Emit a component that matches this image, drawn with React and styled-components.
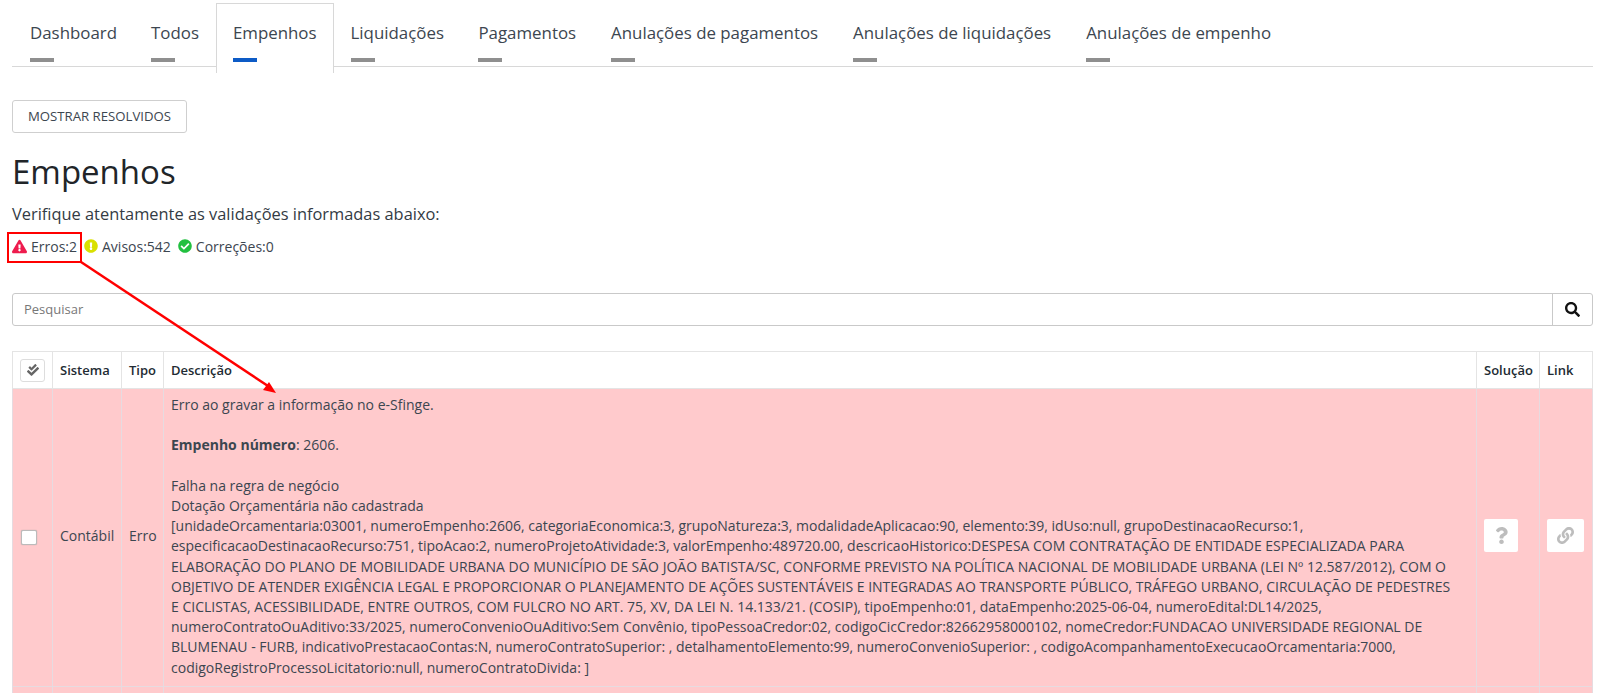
import React from "react";
import styled, { createGlobalStyle } from "styled-components";
import { FaExclamationTriangle, FaExclamationCircle, FaCheckCircle, FaSearch, FaQuestion, FaLink, FaCheckDouble } from "react-icons/fa";

const Global = createGlobalStyle`
  html, body { margin: 0; padding: 0; height: 693px; overflow: hidden; background: #fff; }
  body { font-family: "Open Sans", sans-serif; color: #212529; }
`;
const Page = styled.div`
  position: relative; width: 1600px; height: 693px; overflow: hidden; box-sizing: border-box;
  padding: 0 7px 0 12px;
`;
const Tabs = styled.nav`
  display: flex; height: 66px; border-bottom: 1px solid #d8d8d8; padding-left: 1px;
`;
const Tab = styled.div`
  box-sizing: border-box; height: ${p => (p.$active ? "70px" : "66px")}; margin-top: ${p => (p.$active ? "3px" : "0")};
  padding: ${p => (p.$active ? "17px 16px 0" : `21px ${p.$tight ? 17 : 17.5}px 0`)};
  border: ${p => (p.$active ? "1px solid #d8d8d8" : "0")}; border-bottom: 0;
  background: #fff; font-size: 16.88px; line-height: 24px; color: #3c4650; white-space: nowrap; position: relative;
  &::after {
    content: ""; display: block; width: 24px; height: 4px; margin-top: 13px;
    background: ${p => (p.$active ? "#0d5bc6" : "#8f8f8f")};
  }
`;
const ResolveButton = styled.button`
  display: block; box-sizing: border-box; margin: 33px 0 0; width: 175px; height: 33px;
  background: #fff; border: 1px solid #cfcfcf; border-radius: 3px;
  font: 13.2px/1 "Open Sans", sans-serif; color: #3c4650; padding: 0;
`;
const Title = styled.h1`
  margin: 17px 0 0; font-size: 33px; line-height: 44px; font-weight: 400; color: #212529;
`;
const Lead = styled.p`
  margin: 9px 0 0; font-size: 16.4px; line-height: 22px; color: #333b44;
`;
const Statuses = styled.div`
  display: flex; align-items: center; gap: 7px; margin-top: 10px; height: 22px; font-size: 14px; color: #3c4650;
`;
const Status = styled.span`
  display: inline-flex; align-items: center; gap: 4px;
  svg { color: ${p => p.$color}; font-size: ${p => p.$size || 14}px; }
`;
const Search = styled.div`
  display: flex; height: 33px; margin-top: 36px; box-sizing: border-box; border: 1px solid #c9c9c9; border-radius: 3px;
`;
const SearchInput = styled.div`
  flex: 1; padding-left: 11px; font-size: 13px; line-height: 31px; color: #777;
`;
const SearchButton = styled.div`
  width: 39px; border-left: 1px solid #c9c9c9; display: flex; align-items: center; justify-content: center;
  font-size: 15px; color: #111;
`;
const Table = styled.table`
  margin-top: 25px; width: 100%; border-collapse: collapse; table-layout: fixed; font-size: 14px; line-height: 20.2px;
  color: #3c4650;
  th, td { border: 1px solid #e4e4e4; padding: 0 7px; }
`;
const Head = styled.th`
  height: 36px; font-weight: 600; text-align: left; font-size: 13px; color: #222b33; background: #fff;
`;
const Row = styled.tr`
  background: #ffcacc;
  td { border-color: #e6dbe0; }
`;
const Cell = styled.td`
  vertical-align: middle; padding-bottom: 3px !important;
`;
const DescCell = styled.td`
  padding: 6px 7px 8px !important; vertical-align: top;
`;
const Para = styled.div`
  margin-bottom: 20.2px;
`;
const MasterCheck = styled.span`
  display: inline-flex; width: 25px; height: 23px; box-sizing: border-box; align-items: center; justify-content: center;
  border: 1px solid #ddd; border-radius: 3px; color: #666; font-size: 12px;
`;
const Check = styled.span`
  display: inline-block; vertical-align: middle; margin-left: 1px; width: 16px; height: 15px; box-sizing: border-box; background: #fff; border: 1px solid #bbb; border-radius: 2px; box-shadow: 0 0 1px #999;
`;
const IconButton = styled.span`
  display: inline-flex; vertical-align: middle; width: ${p => p.$w}px; height: 33px; align-items: center; justify-content: center;
  background: #fff; border-radius: 2px; color: #bdbdbd; font-size: 17px;
`;
const Highlight = styled.div`
  position: absolute; left: 7px; top: 232px; width: 75px; height: 31px; box-sizing: border-box; border: 2px solid #f00; pointer-events: none;
`;
const ArrowSvg = styled.svg`
  position: absolute; left: 0; top: 0; pointer-events: none;
`;

export default function App() {
  return (
    <Page>
      <Global />
      <Tabs>
        {["Dashboard", "Todos", "Empenhos", "Liquidações", "Pagamentos", "Anulações de pagamentos", "Anulações de liquidações", "Anulações de empenho"].map((t, i) => (
          <Tab key={t} $active={t === "Empenhos"} $tight={i < 4}>{t}</Tab>
        ))}
      </Tabs>
      <ResolveButton>MOSTRAR RESOLVIDOS</ResolveButton>
      <Title>Empenhos</Title>
      <Lead>Verifique atentamente as validações informadas abaixo:</Lead>
      <Statuses>
        <Status $color="#ee1c4e" $size={15}><FaExclamationTriangle />Erros:2</Status>
        <Status $color="#d9e000"><FaExclamationCircle />Avisos:542</Status>
        <Status $color="#22c040"><FaCheckCircle />Correções:0</Status>
      </Statuses>
      <Search>
        <SearchInput>Pesquisar</SearchInput>
        <SearchButton><FaSearch /></SearchButton>
      </Search>
      <Table>
        <colgroup>
          <col style={{ width: 40 }} /><col style={{ width: 69 }} /><col style={{ width: 42 }} /><col />
          <col style={{ width: 63 }} /><col style={{ width: 53 }} />
        </colgroup>
        <thead>
          <tr>
            <Head><MasterCheck><FaCheckDouble /></MasterCheck></Head>
            <Head>Sistema</Head>
            <Head>Tipo</Head>
            <Head>Descrição</Head>
            <Head>Solução</Head>
            <Head>Link</Head>
          </tr>
        </thead>
        <tbody>
          <Row>
            <Cell><Check /></Cell>
            <Cell>Contábil</Cell>
            <Cell>Erro</Cell>
            <DescCell>
              <Para>Erro ao gravar a informação no e-Sfinge.</Para>
              <Para><b>Empenho número</b>: 2606.</Para>
              Falha na regra de negócio<br />
              Dotação Orçamentária não cadastrada<br />
              [unidadeOrcamentaria:03001, numeroEmpenho:2606, categoriaEconomica:3, grupoNatureza:3, modalidadeAplicacao:90, elemento:39, idUso:null, grupoDestinacaoRecurso:1,<br />
              especificacaoDestinacaoRecurso:751, tipoAcao:2, numeroProjetoAtividade:3, valorEmpenho:489720.00, descricaoHistorico:DESPESA COM CONTRATAÇÃO DE ENTIDADE ESPECIALIZADA PARA<br />
              ELABORAÇÃO DO PLANO DE MOBILIDADE URBANA DO MUNICÍPIO DE SÃO JOÃO BATISTA/SC, CONFORME PREVISTO NA POLÍTICA NACIONAL DE MOBILIDADE URBANA (LEI Nº 12.587/2012), COM O<br />
              OBJETIVO DE ATENDER EXIGÊNCIA LEGAL E PROPORCIONAR O PLANEJAMENTO DE AÇÕES SUSTENTÁVEIS E INTEGRADAS AO TRANSPORTE PÚBLICO, TRÁFEGO URBANO, CIRCULAÇÃO DE PEDESTRES<br />
              E CICLISTAS, ACESSIBILIDADE, ENTRE OUTROS, COM FULCRO NO ART. 75, XV, DA LEI N. 14.133/21. (COSIP), tipoEmpenho:01, dataEmpenho:2025-06-04, numeroEdital:DL14/2025,<br />
              numeroContratoOuAditivo:33/2025, numeroConvenioOuAditivo:Sem Convênio, tipoPessoaCredor:02, codigoCicCredor:82662958000102, nomeCredor:FUNDACAO UNIVERSIDADE REGIONAL DE<br />
              BLUMENAU - FURB, indicativoPrestacaoContas:N, numeroContratoSuperior: , detalhamentoElemento:99, numeroConvenioSuperior: , codigoAcompanhamentoExecucaoOrcamentaria:7000,<br />
              codigoRegistroProcessoLicitatorio:null, numeroContratoDivida: ]
            </DescCell>
            <Cell><IconButton $w={34}><FaQuestion /></IconButton></Cell>
            <Cell><IconButton $w={37}><FaLink /></IconButton></Cell>
          </Row>
          <Row>
            <Cell /><Cell /><Cell /><DescCell style={{ height: 60 }} /><Cell /><Cell />
          </Row>
        </tbody>
      </Table>
      <Highlight />
      <ArrowSvg width="1600" height="693">
        <line x1="81" y1="262" x2="268" y2="386" stroke="#f00" strokeWidth="2.5" />
        <polygon points="276,393 263,390 269,382" fill="#f00" />
      </ArrowSvg>
    </Page>
  );
}
